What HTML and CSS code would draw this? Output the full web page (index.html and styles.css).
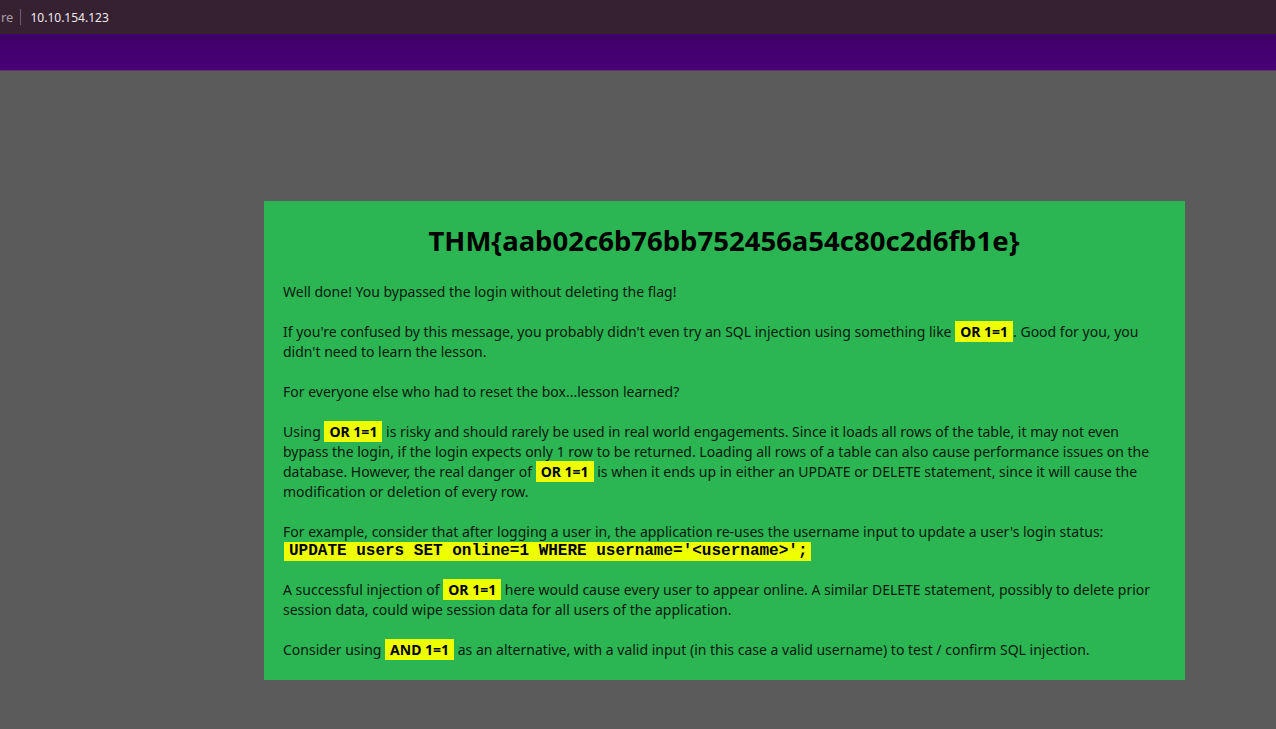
FILE: index.html
```html
<!DOCTYPE html>
<html>
<head>
<meta charset="utf-8">
<link rel="stylesheet" href="styles.css">
</head>
<body>
<div class="urlbar"><span class="scheme">re</span><span class="sep"></span><span class="host">10.10.154.123</span></div>
<div class="navbar"></div>
<main class="stage">
  <section class="card">
    <h1 class="flag">THM{aab02c6b76bb752456a54c80c2d6fb1e}</h1>
    <p>Well done! You bypassed the login without deleting the flag!</p>
    <p>If you're confused by this message, you probably didn't even try an SQL injection using something like <code class="hl">OR 1=1</code>. Good for you, you didn't need to learn the lesson.</p>
    <p>For everyone else who had to reset the box...lesson learned?</p>
    <p>Using <code class="hl">OR 1=1</code> is risky and should rarely be used in real world engagements. Since it loads all rows of the table, it may not even bypass the login, if the login expects only 1 row to be returned. Loading all rows of a table can also cause performance issues on the database. However, the real danger of <code class="hl">OR 1=1</code> is when it ends up in either an UPDATE or DELETE statement, since it will cause the modification or deletion of every row.</p>
    <p class="with-code">For example, consider that after logging a user in, the application re-uses the username input to update a user's login status:<br><code class="sql">UPDATE users SET online=1 WHERE username='&lt;username&gt;';</code></p>
    <p>A successful injection of <code class="hl">OR 1=1</code> here would cause every user to appear online. A similar DELETE statement, possibly to delete prior session data, could wipe session data for all users of the application.</p>
    <p>Consider using <code class="hl">AND 1=1</code> as an alternative, with a valid input (in this case a valid username) to test / confirm SQL injection.</p>
  </section>
</main>
</body>
</html>
```
FILE: styles.css
```css
html, body {
  margin: 0;
  padding: 0;
  height: 100%;
}
body {
  background: #5b5b5b;
  font-family: "Noto Sans", sans-serif;
  overflow: hidden;
}
.urlbar {
  height: 34px;
  background: #362131;
  display: flex;
  align-items: center;
  font-family: "Noto Sans", sans-serif;
  font-size: 12px;
  color: #f0eaf0;
}
.scheme {
  color: #a99aa6;
  font-size: 13px;
  margin-left: 1px;
}
.sep {
  width: 1px;
  height: 16px;
  background: #6f5d6b;
  margin: 0 9px 0 7px;
}
.navbar {
  height: 36px;
  background: linear-gradient(#3e0067, #490078);
  border-bottom: 1px solid #5a3560;
}
.stage {
  padding: 130px 0 0 264px;
}
.card {
  width: 882px;
  background: #2bb553;
  padding: 20px 20px 20px 19px;
  color: #0b1a0e;
  font-size: 14px;
  line-height: 20px;
}
.flag {
  margin: 0 0 21px;
  text-align: center;
  font-size: 27.5px;
  line-height: 40px;
  font-weight: 700;
  color: #000;
}
.card p {
  margin: 0 0 20px;
}
.card p.with-code {
  margin-bottom: 18px;
}
.card p:last-child {
  margin-bottom: 0;
}
.hl {
  font-family: "Noto Sans", sans-serif;
  font-weight: 700;
  background: #eeff00;
  color: #000;
  padding: 1px 5px;
}
.sql {
  display: inline-block;
  vertical-align: top;
  font-family: "Liberation Mono", monospace;
  font-weight: 700;
  font-size: 16px;
  line-height: 19px;
  background: #eeff00;
  color: #000;
  padding: 0 4px 0 5px;
  margin-left: 1px;
}
```
